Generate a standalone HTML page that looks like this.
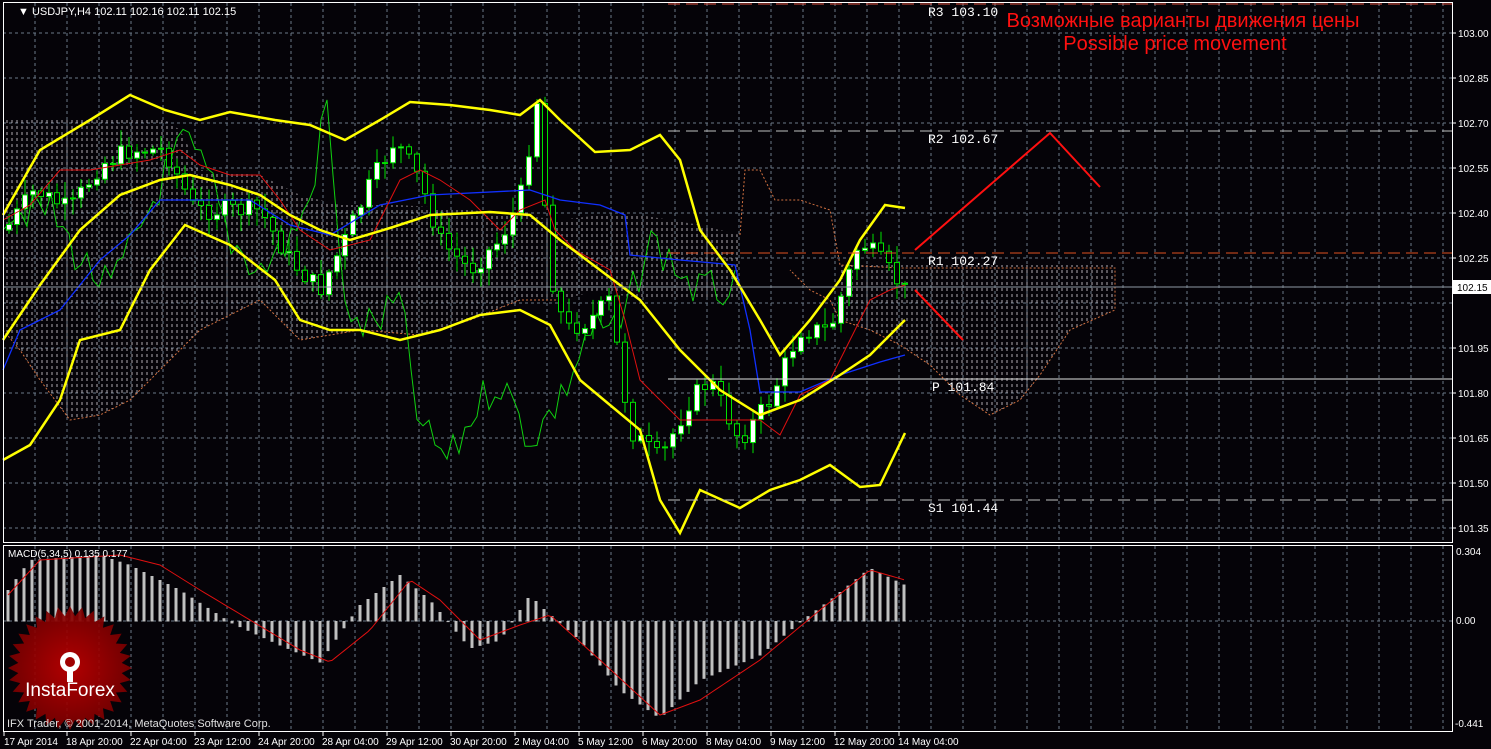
<!DOCTYPE html>
<html><head><meta charset="utf-8"><style>
html,body{margin:0;padding:0;background:#000;width:1491px;height:749px;overflow:hidden}
svg{display:block}
text{font-family:"Liberation Sans",sans-serif}
.mono{font-family:"Liberation Mono",monospace}
</style></head><body>
<svg id="s" width="1491" height="749" xmlns="http://www.w3.org/2000/svg">
<rect width="1491" height="749" fill="#050308"/>
<defs>
<pattern id="hatch" width="5" height="6" patternUnits="userSpaceOnUse">
<line x1="2" y1="0" x2="2" y2="3" stroke="#e8e0e8" stroke-width="1"/>
</pattern>
<radialGradient id="lg" cx="50%" cy="50%" r="50%"><stop offset="0" stop-color="#c00000"/><stop offset="1" stop-color="#7a0000"/></radialGradient>
</defs>
<g id="grid" stroke="#6a7888" stroke-dasharray="3,3" stroke-width="1"></g>
<g opacity="0.75">
<polygon fill="url(#hatch)" points="3,120 165,120 180,130 200,170 260,175 300,195 340,205 400,205 470,210 520,215 560,220 600,215 640,215 700,225 740,235 740,300 700,300 640,300 600,290 560,300 520,300 470,320 420,335 360,330 300,340 260,300 200,330 160,370 130,400 100,415 70,420 40,380 20,350 3,330"/>
<polygon fill="url(#hatch)" points="840,265 1115,265 1115,310 1070,330 1040,375 1020,400 990,415 960,395 930,365 900,345 870,330 840,320"/>
</g>
<polyline fill="none" stroke="#d07040" stroke-width="1" stroke-dasharray="2,2" points="740,235 745,170 760,170 775,200 800,200 830,210 840,265 900,268 1115,268 1115,310 1070,330 1040,375 1020,400 990,415 960,395 930,365 900,345 870,330 840,320 830,300 810,290 790,270"/>
<polyline fill="none" stroke="#d07040" stroke-width="1" stroke-dasharray="2,2" points="3,330 20,350 40,380 70,420 100,415 130,400 160,370 200,330 260,300 300,340 360,330 420,335 470,320 520,300 560,300"/>
<g id="chikou"></g>
<g id="candles"></g>
<polyline fill="none" stroke="#1030ff" stroke-width="1.3" points="3,370 20,330 60,310 100,260 130,235 160,200 250,200 290,225 330,235 380,205 430,195 530,190 560,200 600,205 625,215 630,255 680,260 735,265 750,330 760,392 800,392 840,375 880,362 905,355"/>
<polyline fill="none" stroke="#e01010" stroke-width="1" points="3,220 30,205 60,170 90,170 120,165 150,160 180,150 200,165 230,175 260,175 280,200 300,230 330,250 370,240 400,180 420,170 440,180 470,200 500,230 520,210 545,200 555,230 575,250 610,270 625,320 640,380 680,420 730,420 760,420 780,435 800,395 830,380 850,340 870,300 890,290 905,285"/>
<g fill="none" stroke="#ffff00" stroke-width="2.5">
<polyline points="3,215 40,150 90,120 130,95 165,110 200,120 230,112 275,120 310,125 345,140 380,120 410,102 450,105 490,110 520,115 540,100 560,120 595,152 630,150 660,135 680,160 700,230 730,270 760,320 780,355 810,320 840,280 860,240 885,205 905,208"/>
<polyline points="3,340 40,285 80,230 120,195 160,180 190,175 230,185 260,195 290,215 320,230 350,240 390,228 430,215 490,212 530,215 560,240 600,270 640,300 680,350 720,390 760,415 800,400 840,375 870,355 905,320"/>
<polyline points="3,460 30,445 60,400 80,340 120,330 150,270 185,225 230,245 275,280 300,320 330,330 360,330 400,340 440,330 480,315 520,310 550,325 580,380 610,405 640,430 660,500 680,533 700,490 740,508 770,490 800,480 830,465 860,487 880,485 905,433"/>
</g>
<line x1="668" y1="4" x2="1452" y2="4" stroke="#e05040" stroke-dasharray="12,6" stroke-width="1"/>
<line x1="668" y1="131" x2="1452" y2="131" stroke="#c0c0c0" stroke-dasharray="12,6" stroke-width="1"/>
<line x1="668" y1="253" x2="1452" y2="253" stroke="#e05020" stroke-dasharray="12,6" stroke-width="1"/>
<line x1="3" y1="287" x2="1452" y2="287" stroke="#909aa4" stroke-width="1"/>
<line x1="668" y1="379" x2="1452" y2="379" stroke="#e0e0e0" stroke-width="1"/>
<line x1="668" y1="500" x2="1452" y2="500" stroke="#c0c0c0" stroke-dasharray="12,6" stroke-width="1"/>
<g fill="#fff" font-size="13">
<text class="mono" x="928" y="16">R3 103.10</text>
<text class="mono" x="928" y="143">R2 102.67</text>
<text class="mono" x="928" y="265">R1 102.27</text>
<text class="mono" x="932" y="391">P 101.84</text>
<text class="mono" x="928" y="512">S1 101.44</text>
</g>
<polyline fill="none" stroke="#ff1010" stroke-width="2" points="915,250 1050,133 1100,187"/>
<line x1="915" y1="290" x2="963" y2="340" stroke="#ff1010" stroke-width="2"/>
<text x="1183" y="27" fill="#ff1010" font-size="20" text-anchor="middle">Возможные варианты движения цены</text>
<text x="1175" y="50" fill="#ff1010" font-size="20" text-anchor="middle">Possible price movement</text>
<g id="macd"></g>
<g transform="translate(70,668)">
<polygon id="star" fill="url(#lg)" opacity="0.92"/>
<g fill="#fff"><circle cx="0" cy="-6" r="10"/><rect x="-3" y="-4" width="6" height="18" fill="#fff"/></g>
<circle cx="0" cy="-6" r="5" fill="#a00000"/>
<text x="0" y="28" fill="#fff" font-size="19" text-anchor="middle">InstaForex</text>
</g>
<text x="7" y="727" fill="#e0e0e0" font-size="11">IFX Trader, © 2001-2014, MetaQuotes Software Corp.</text>
<rect x="3.5" y="2.5" width="1449" height="540" fill="none" stroke="#fff"/>
<rect x="3.5" y="545.5" width="1449" height="186" fill="none" stroke="#fff"/>
<text x="18" y="15" fill="#fff" font-size="11">▼ USDJPY,H4  102.11 102.16 102.11 102.15</text>
<text x="8" y="557" fill="#fff" font-size="10">MACD(5,34,5) 0.135 0.177</text>
<g id="axis" fill="#fff" font-size="10"></g>
<rect x="1453" y="280" width="38" height="14" fill="#fff"/>
<text x="1457" y="291" fill="#000" font-size="10">102.15</text>
</svg>
<script>
var NS="http://www.w3.org/2000/svg",s=document.getElementById('s');
function el(p,t,a){var e=document.createElementNS(NS,t);for(var k in a)e.setAttribute(k,a[k]);p.appendChild(e);return e;}
var g=document.getElementById('grid');
for(var x=35;x<1452;x+=32){el(g,'line',{x1:x,y1:3,x2:x,y2:542});el(g,'line',{x1:x,y1:546,x2:x,y2:731});}
for(var y=33;y<542;y+=45)el(g,'line',{x1:3,y1:y,x2:1452,y2:y});
el(g,'line',{x1:3,y1:621,x2:1452,y2:621});
var ax=document.getElementById('axis');
var pr=["103.00","102.85","102.70","102.55","102.40","102.25","102.10","101.95","101.80","101.65","101.50","101.35"];
pr.forEach(function(p,i){if(i==6)return;el(ax,'line',{x1:1452,y1:33+45*i,x2:1456,y2:33+45*i,stroke:'#fff'});el(ax,'text',{x:1458,y:37+45*i}).textContent=p;});
el(ax,'text',{x:1456,y:555}).textContent="0.304";el(ax,'text',{x:1456,y:624}).textContent="0.00";el(ax,'text',{x:1455,y:727}).textContent="-0.441";
var d=["17 Apr 2014","18 Apr 20:00","22 Apr 04:00","23 Apr 12:00","24 Apr 20:00","28 Apr 04:00","29 Apr 12:00","30 Apr 20:00","2 May 04:00","5 May 12:00","6 May 20:00","8 May 04:00","9 May 12:00","12 May 20:00","14 May 04:00"];
d.forEach(function(t,i){var x=i==0?4:67+64*(i-1);el(ax,'line',{x1:x,y1:732,x2:x,y2:736,stroke:'#fff'});el(ax,'text',{x:i==0?4:x-1,y:745}).textContent=t;});
function interp(pts,x){for(var i=1;i<pts.length;i++){if(x<=pts[i][0]){var a=pts[i-1],b=pts[i];return a[1]+(b[1]-a[1])*(x-a[0])/(b[0]-a[0]);}}return pts[pts.length-1][1];}
var P=[[5,230],[35,190],[70,210],[100,165],[130,150],[165,150],[195,210],[230,210],[260,210],[290,260],[320,290],[345,240],[370,185],[395,140],[420,180],[440,240],[470,270],[500,240],[520,200],[537,100],[550,270],[565,330],[590,320],[610,300],[630,430],[660,460],[690,400],[710,380],[740,440],[770,400],[800,330],[830,330],[860,240],[880,260],[905,290]];
var c=document.getElementById('candles'),seed=7;function rnd(){seed=(seed*9301+49297)%233280;return seed/233280;}
var prev=interp(P,5);
for(var x=9;x<=905;x+=8){var cl=interp(P,x)+(rnd()-0.5)*20,op=prev,hi=Math.min(op,cl)-rnd()*15-2,lo=Math.max(op,cl)+rnd()*15+2;
el(c,'line',{x1:x,y1:hi,x2:x,y2:lo,stroke:'#00e000','stroke-width':1});
var bull=cl<op;el(c,'rect',{x:x-2.5,y:Math.min(op,cl),width:5,height:Math.max(1,Math.abs(op-cl)),fill:bull?'#fff':'#000',stroke:'#00e000','stroke-width':1});prev=cl;}
var ch=[];for(var x=3;x<=740;x+=6){ch.push(x+','+(interp(P,Math.min(905,x+210))+(rnd()-0.5)*40).toFixed(1));}
el(document.getElementById('chikou'),'polyline',{points:ch.join(' '),fill:'none',stroke:'#10d010','stroke-width':1});
var M=[[8,590],[30,560],[100,555],[130,565],[180,590],[230,622],[280,645],[320,662],[360,605],[400,575],[430,600],[470,648],[500,640],[530,595],[545,610],[580,640],[620,690],[660,718],[700,680],[760,655],[800,622],[830,600],[870,568],[905,585]];
var S=[[8,595],[40,560],[120,555],[160,565],[200,590],[250,620],[300,650],[330,662],[370,630],[410,580],[440,600],[480,640],[520,625],[550,615],[600,660],[660,715],[700,700],[760,660],[820,610],[870,570],[905,580]];
var m=document.getElementById('macd');
for(var x=8;x<=905;x+=8){var v=interp(M,x);el(m,'rect',{x:x-1.5,y:Math.min(v,621),width:3,height:Math.abs(v-621)+0.5,fill:'#c0c0c0'});}
var sp=[];for(var x=8;x<=905;x+=4)sp.push(x+','+interp(S,x));
el(m,'polyline',{points:sp.join(' '),fill:'none',stroke:'#e01010','stroke-width':1});
var st=[];for(var i=0;i<64;i++){var a=i*Math.PI/32,r=i%2?52:62;st.push((r*Math.cos(a)).toFixed(1)+','+(r*Math.sin(a)).toFixed(1));}
document.getElementById('star').setAttribute('points',st.join(' '));
</script>
</body></html>
